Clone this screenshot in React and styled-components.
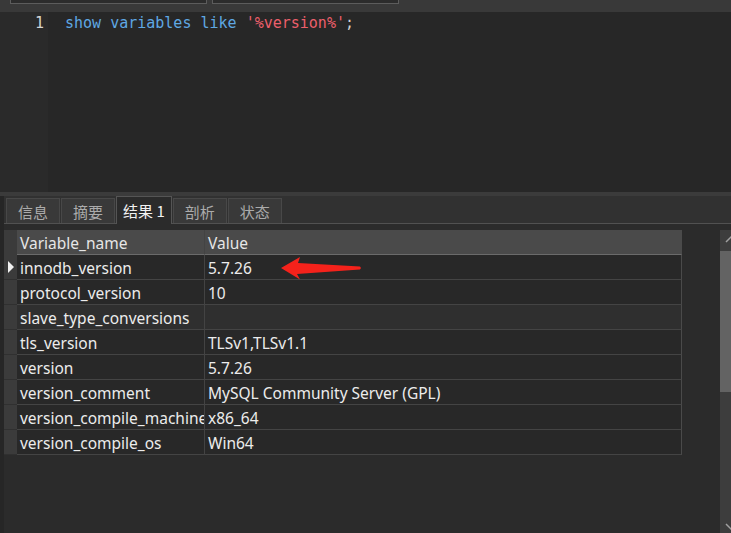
import React from 'react'
import styled, { createGlobalStyle, css } from 'styled-components'

const rows = [
  { name: 'innodb_version', value: '5.7.26', current: true },
  { name: 'protocol_version', value: '10' },
  { name: 'slave_type_conversions', value: '', hover: true },
  { name: 'tls_version', value: 'TLSv1,TLSv1.1' },
  { name: 'version', value: '5.7.26' },
  { name: 'version_comment', value: 'MySQL Community Server (GPL)' },
  { name: 'version_compile_machine', value: 'x86_64' },
  { name: 'version_compile_os', value: 'Win64' },
]

const tabs = ['信息', '摘要', '结果 1', '剖析', '状态']

function App() {
  return (
    <Page>
      <GlobalStyle />
      <TopBar>
        <Field $width={195} />
        <Field $width={185} />
      </TopBar>
      <Editor>
        <Gutter>1</Gutter>
        <Code>
          <Kw>show variables like</Kw> <Str>'%version%'</Str>;
        </Code>
      </Editor>
      <Splitter />
      <Lower>
        <LeftStrip />
        <Main>
          <TabBar>
            {tabs.map((t) => (
              <Tab key={t} $active={t === '结果 1'}>{t}</Tab>
            ))}
          </TabBar>
          <Results>
            <GridWrap>
              <Grid>
                <RowHead $header />
                <HeadCell>Variable_name</HeadCell>
                <HeadCell $last>Value</HeadCell>
                {rows.map((r) => (
                  <React.Fragment key={r.name}>
                    <RowHead>{r.current && <Pointer />}</RowHead>
                    <Cell $hover={r.hover}>{r.name}</Cell>
                    <Cell $hover={r.hover} $last>{r.value}</Cell>
                  </React.Fragment>
                ))}
              </Grid>
              <Arrow width="81" height="23" viewBox="0 0 81 23">
                <polygon
                  points="0,11 19,0 17,6 79,9.5 80,11 79,12.5 16,17 19,22.5"
                  fill="#f5221b"
                />
              </Arrow>
            </GridWrap>
            <ScrollBar>
              <ScrollBtn $h={20}>
                <svg width="11" height="20" viewBox="0 0 11 20">
                  <polyline points="6,12 11,7 16,12" fill="none" stroke="#a0a0a0" strokeWidth="1.5" />
                </svg>
              </ScrollBtn>
              <Thumb />
              <Track />
              <ScrollBtn $h={11}>
                <svg width="11" height="11" viewBox="0 0 11 11">
                  <polyline points="6,2 11,7 16,2" fill="none" stroke="#a0a0a0" strokeWidth="1.5" />
                </svg>
              </ScrollBtn>
            </ScrollBar>
          </Results>
        </Main>
      </Lower>
    </Page>
  )
}

export default App

const GlobalStyle = createGlobalStyle`
  html, body {
    margin: 0;
    padding: 0;
    background: #2b2b2b;
    overflow: hidden;
  }
`

const Page = styled.div`
  width: 731px;
  height: 533px;
  display: flex;
  flex-direction: column;
  overflow: hidden;
  background: #2b2b2b;
`

const TopBar = styled.div`
  height: 12px;
  flex: none;
  display: flex;
  align-items: flex-start;
  gap: 5px;
  padding-left: 10px;
  background: #393939;
`

const Field = styled.div`
  width: ${(p) => p.$width}px;
  height: 3px;
  background: #2c2c2c;
  border: 1px solid #5c5c5c;
  border-top: none;
`

const Editor = styled.div`
  height: 180px;
  flex: none;
  box-sizing: border-box;
  display: flex;
  font-family: "DejaVu Sans Mono", "Liberation Mono", monospace;
  font-size: 15px;
  line-height: 20px;
`

const Gutter = styled.div`
  width: 48px;
  box-sizing: border-box;
  padding: 1px 4px 0 0;
  text-align: right;
  color: #d4d4d4;
  background: #2a2a2a;
`

const Code = styled.div`
  flex: 1;
  padding: 1px 0 0 17px;
  color: #d0d0d0;
  background: #272727;
  white-space: pre;
`

const Kw = styled.span`
  color: #5fa8e3;
`

const Str = styled.span`
  color: #ec5f6b;
`

const Splitter = styled.div`
  height: 4px;
  flex: none;
  background: #3b3b3b;
`

const Lower = styled.div`
  flex: 1;
  display: flex;
  min-height: 0;
`

const LeftStrip = styled.div`
  width: 4px;
  background: #262626;
`

const Main = styled.div`
  flex: 1;
  display: flex;
  flex-direction: column;
`

const TabBar = styled.div`
  height: 27px;
  flex: none;
  display: flex;
  align-items: flex-end;
  gap: 1px;
  padding-left: 2px;
  background: #313131;
  border-bottom: 1px solid #515151;
  font-family: "Noto Sans CJK SC", "Noto Sans", sans-serif;
  font-size: 15px;
`

const Tab = styled.div`
  height: 24px;
  padding: 0 11px;
  display: flex;
  align-items: center;
  background: #393939;
  color: #ababab;
  border: 1px solid #484848;
  border-bottom: none;

  ${(p) =>
    p.$active &&
    css`
      height: 27px;
      margin-bottom: -1px;
      padding: 0 6px;
      background: #2b2b2b;
      color: #f2f2f2;
      border-color: #555;
    `}
`

const Results = styled.div`
  flex: 1;
  display: flex;
  justify-content: space-between;
  padding-top: 6px;
  background: #2b2b2b;
`

const GridWrap = styled.div`
  position: relative;
  align-self: flex-start;
`

const Grid = styled.div`
  display: grid;
  grid-template-columns: 13px 188px 477px;
  grid-auto-rows: 25px;
  font-family: "Noto Sans", "Open Sans", sans-serif;
  font-size: 15.5px;
`

const RowHead = styled.div`
  position: relative;
  background: #3b3b3b;
  border-bottom: 1px solid ${(p) => (p.$header ? '#3b3b3b' : '#303030')};
`

const Pointer = styled.span`
  position: absolute;
  left: 4px;
  top: 6px;
  width: 0;
  height: 0;
  border-top: 6px solid transparent;
  border-bottom: 6px solid transparent;
  border-left: 6px solid #f0f0f0;
`

const cellBase = css`
  box-sizing: border-box;
  padding: 1px 0 0 3px;
  display: flex;
  align-items: center;
  white-space: nowrap;
  overflow: hidden;
  border-right: 1px solid ${(p) => (p.$last ? '#4a4a4a' : '#434343')};
`

const HeadCell = styled.div`
  ${cellBase}
  background: #4a4a4a;
  color: #e6e6e6;
  border-bottom: 1px solid #6b6b6b;
`

const Cell = styled.div`
  ${cellBase}
  background: ${(p) => (p.$hover ? '#2f2f2f' : '#282828')};
  color: #ececec;
  border-bottom: 1px solid #444;
`

const Arrow = styled.svg`
  position: absolute;
  left: 277px;
  top: 27px;
`

const ScrollBar = styled.div`
  width: 11px;
  display: flex;
  flex-direction: column;
  background: #3d3d3d;
`

const ScrollBtn = styled.div`
  height: ${(p) => p.$h}px;
  flex: none;
  overflow: hidden;
  background: #3d3d3d;

  svg {
    display: block;
    overflow: hidden;
  }
`

const Thumb = styled.div`
  height: 141px;
  flex: none;
  margin-top: 1px;
  background: #636363;
`

const Track = styled.div`
  flex: 1;
`
